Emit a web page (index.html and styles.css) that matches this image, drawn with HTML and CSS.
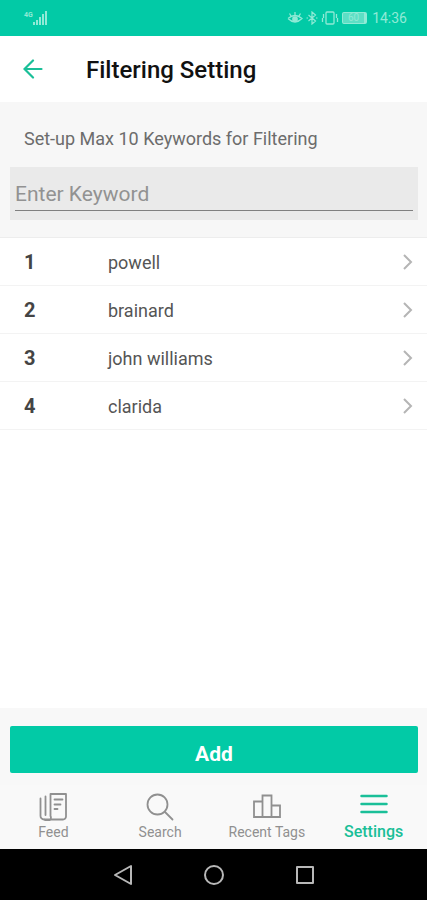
FILE: index.html
```html
<!DOCTYPE html>
<html lang="en">
<head>
<meta charset="utf-8">
<meta name="viewport" content="width=device-width, initial-scale=1">
<title>Filtering Setting</title>
<link rel="stylesheet" href="styles.css">
</head>
<body>
<div class="status">
  <div class="signal">
    <span class="network">4G</span>
    <svg width="14" height="14" viewBox="0 0 14 14" fill="currentColor" aria-hidden="true"><path d="M0 11h2v3H0zM3 9h2v5H3zM6 6h2v8H6zM9 3h2v11H9zM12 0h2v14h-2z"/></svg>
  </div>
  <div class="indicators">
    <svg width="16" height="14" viewBox="0 0 16 14" fill="none" stroke="currentColor" stroke-width="1.300" aria-hidden="true"><path d="M1 7.500Q8 1.500 15 7.500Q8 14.500 1 7.500M8 4V1M4 5L2.500 2.500M12 5l1.500-2.500"/><circle cx="8" cy="8" r="2.200" fill="currentColor"/></svg>
    <svg width="12" height="14" viewBox="0 0 12 14" fill="none" stroke="currentColor" stroke-width="1.200" aria-hidden="true"><path d="M2.500 4l7 6L6 13V1l3.500 3-7 6M.5 7h1.500M10 7h1.500"/></svg>
    <svg width="18" height="14" viewBox="0 0 18 14" fill="none" stroke="currentColor" stroke-width="1.300" aria-hidden="true"><rect x="5" y="1" width="8" height="12" rx="1"/><path d="M2.500 3v4M15.500 3v4M1.500 7v4M16.500 7v4"/></svg>
    <span class="battery">60</span>
    <time>14:36</time>
  </div>
</div>

<header class="header">
  <button class="back" type="button" aria-label="Back">
    <svg width="20" height="20" viewBox="0 0 20 20" fill="none" stroke="currentColor" stroke-width="2.200" stroke-linecap="round" aria-hidden="true"><path d="M18.500 10H1.500M10 1.500L1.500 10l8.500 8.500"/></svg>
  </button>
  <h1>Filtering Setting</h1>
</header>

<main class="content">
  <div class="entry">
    <label for="keyword">Set-up Max 10 Keywords for Filtering</label>
    <div class="field"><input id="keyword" type="text" placeholder="Enter Keyword"></div>
  </div>
  <ol class="keywords">
    <li><a href="#powell"><b>1</b><span>powell</span><svg width="10" height="16" viewBox="0 0 10 16" aria-hidden="true"><path d="M1 1l7 7-7 7"/></svg></a></li>
    <li><a href="#brainard"><b>2</b><span>brainard</span><svg width="10" height="16" viewBox="0 0 10 16" aria-hidden="true"><path d="M1 1l7 7-7 7"/></svg></a></li>
    <li><a href="#john-williams"><b>3</b><span>john williams</span><svg width="10" height="16" viewBox="0 0 10 16" aria-hidden="true"><path d="M1 1l7 7-7 7"/></svg></a></li>
    <li><a href="#clarida"><b>4</b><span>clarida</span><svg width="10" height="16" viewBox="0 0 10 16" aria-hidden="true"><path d="M1 1l7 7-7 7"/></svg></a></li>
  </ol>
</main>

<div class="action"><button class="add" type="button">Add</button></div>

<nav class="tabs" aria-label="Main">
  <a href="#feed">
    <svg width="28" height="28" viewBox="0 0 28 28" fill="none" stroke="currentColor" stroke-width="1.800" stroke-linejoin="round" stroke-linecap="round" aria-hidden="true"><path d="M11.500 1H27v22.500a3 3 0 0 1-3 3H5A3.500 3.500 0 0 1 1.500 23V5.500M11.500 1v22a3 3 0 0 1-6 3.300M6.500 3.500V22M15.500 6.500h8M15.500 11.500h6M15.500 16h3"/></svg>
    <span>Feed</span>
  </a>
  <a href="#search">
    <svg width="28" height="28" viewBox="0 0 28 28" fill="none" stroke="currentColor" stroke-width="1.800" stroke-linecap="round" aria-hidden="true"><circle cx="11.500" cy="11.500" r="10"/><path d="M19 19l7.500 7.500"/></svg>
    <span>Search</span>
  </a>
  <a href="#recent-tags">
    <svg width="28" height="28" viewBox="0 0 28 28" fill="none" stroke="currentColor" stroke-width="1.800" aria-hidden="true"><path d="M9.500 24H1V8.500h8.500M9.500 24V2.500h9V24zM18.500 12.500H27V24h-8.500"/></svg>
    <span>Recent Tags</span>
  </a>
  <a class="current" href="#settings" aria-current="page">
    <svg width="28" height="28" viewBox="0 0 28 28" fill="none" stroke="currentColor" stroke-width="2.500" stroke-linecap="round" aria-hidden="true"><path d="M1.500 3h25M1.500 11h25M1.500 19h25"/></svg>
    <span>Settings</span>
  </a>
</nav>

<div class="system">
  <button type="button" aria-label="System back"><svg width="20" height="22" viewBox="0 0 20 22" aria-hidden="true"><path d="M18 2v18L2 11z"/></svg></button>
  <button type="button" aria-label="Home"><svg width="22" height="22" viewBox="0 0 22 22" aria-hidden="true"><circle cx="11" cy="11" r="9"/></svg></button>
  <button type="button" aria-label="Overview"><svg width="20" height="22" viewBox="0 0 20 22" aria-hidden="true"><rect x="2" y="3" width="16" height="16"/></svg></button>
</div>
</body>
</html>
```

FILE: styles.css
```css
* {
  box-sizing: border-box;
}

body {
  margin: 0;
  min-height: 100vh;
  display: flex;
  flex-direction: column;
  font-family: Roboto, "Liberation Sans", sans-serif;
  color: #444;
  background: #fff;
}

button {
  padding: 0;
  border: 0;
  background: none;
  font: inherit;
  color: inherit;
}

a {
  color: inherit;
  text-decoration: none;
}

.status {
  display: flex;
  justify-content: space-between;
  align-items: center;
  height: 36px;
  padding: 0 20px 0 24px;
  background: #02caa6;
  color: #90ead6;
}

.signal,
.indicators {
  display: flex;
  align-items: center;
}

.network {
  align-self: flex-start;
  font-size: 7px;
  font-weight: 700;
  line-height: 8px;
}

.indicators {
  gap: 3px;
}

.battery {
  width: 25px;
  border: 1px solid;
  border-right-width: 3px;
  border-radius: 2px;
  background: #5ddfc5;
  font-size: 10px;
  line-height: 10px;
  text-align: center;
}

.status time {
  padding-left: 2px;
  font-size: 14px;
}

.header {
  display: flex;
  align-items: center;
  gap: 43px;
  height: 66px;
  padding: 0 23px;
}

.back {
  display: flex;
  color: #1abf98;
}

h1 {
  margin: 0;
  padding-top: 2px;
  font-size: 24px;
  font-weight: 500;
  color: #111;
}

.content {
  flex: 1;
}

.entry {
  padding: 24px 9px 17px 10px;
  background: #f7f7f7;
  border-bottom: 1px solid #ededed;
}

.entry label {
  display: block;
  padding: 0 14px;
  margin-bottom: 15px;
  font-size: 18px;
  line-height: 26px;
  color: #6c6c6c;
}

.field {
  padding: 8px 5px 9px;
  background: #eaeaea;
}

.field input {
  display: block;
  width: 100%;
  height: 36px;
  padding: 2px 0 0;
  border: 0;
  border-bottom: 1px solid #808080;
  outline: 0;
  background: none;
  font: 21px Roboto, "Liberation Sans", sans-serif;
  color: #444;
}

.field input::placeholder {
  color: #929292;
  opacity: 1;
}

.keywords {
  margin: 0;
  padding: 0;
  list-style: none;
}

.keywords a {
  display: grid;
  grid-template-columns: 84px 1fr 10px;
  align-items: center;
  height: 48px;
  padding: 0 14px 0 24px;
  border-bottom: 1px solid #f3f3f3;
  font-size: 18px;
  color: #555;
}

.keywords b {
  font-size: 20px;
  color: #444;
}

.keywords span {
  padding-top: 2px;
}

.keywords path {
  fill: none;
  stroke: #b5b5b5;
  stroke-width: 2;
}

.action {
  padding: 18px 9px 12px 10px;
  background: #f8f8f8;
}

.add {
  display: block;
  width: 100%;
  height: 47px;
  padding-top: 8px;
  border-radius: 2px;
  background: #02caa6;
  font-size: 21px;
  font-weight: 700;
  color: #fff;
}

.tabs {
  display: grid;
  grid-template-columns: repeat(4, 1fr);
  height: 64px;
  padding-top: 8px;
  background: #f9f9f9;
  color: #909090;
  font-size: 14px;
}

.tabs a {
  display: flex;
  flex-direction: column;
  align-items: center;
  gap: 1px;
  line-height: 20px;
}

.tabs .current {
  color: #1abf98;
  font-size: 16px;
  font-weight: 500;
}

.system {
  display: flex;
  justify-content: center;
  align-items: center;
  gap: 70px;
  height: 51px;
  background: #000;
}

.system button {
  display: flex;
}

.system svg {
  fill: none;
  stroke: #b8b8b8;
  stroke-width: 2;
  stroke-linejoin: round;
}
```
